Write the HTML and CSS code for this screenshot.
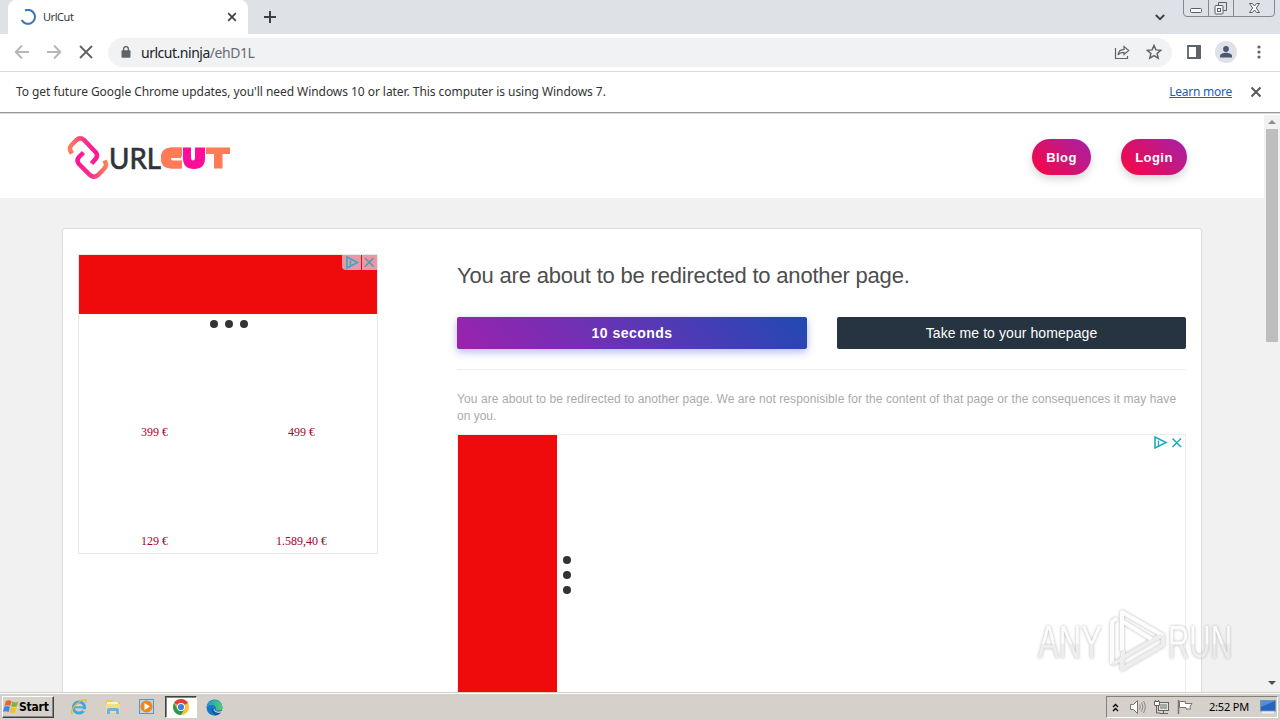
FILE: index.html
```html
<!DOCTYPE html>
<html lang="en">
<head>
<meta charset="utf-8">
<title>UrlCut</title>
<link rel="stylesheet" href="styles.css">
</head>
<body>
<div class="screen">
  <header class="tabstrip">
    <div class="tab">
      <svg class="spinner" width="16" height="16" viewBox="0 0 16 16"><path d="M5 1.500A7 7 0 1 1 1.700 11" fill="none" stroke="#3974b5" stroke-width="2"/></svg>
      <span class="tab-title">UrlCut</span>
      <svg class="tab-close" width="10" height="10" viewBox="0 0 10 10"><path d="M1.200 1.200l7.600 7.600M8.800 1.200L1.200 8.800" stroke="#3c4043" stroke-width="1.700"/></svg>
    </div>
    <svg class="new-tab" width="12" height="12" viewBox="0 0 12 12"><path d="M6 0v12M0 6h12" stroke="#3c4043" stroke-width="2"/></svg>
    <svg class="tab-search" width="10" height="7" viewBox="0 0 10 7"><path d="M.8 1L5 5.200 9.200 1" fill="none" stroke="#3c4043" stroke-width="1.800"/></svg>
    <svg class="win-controls" width="94" height="18" viewBox="0 0 94 18"><g fill="none" stroke="#85888e"><path d="M1.500 0v13q0 3.500 3.500 3.500h84q3.500 0 3.500-3.500V0M26.500 0v16M51.500 0v16"/><g stroke="#5b5e63"><rect x="8.500" y="8.500" width="11" height="4" rx="1" fill="#f6f7f9"/><path d="M36.500 5.500v-3h8v8h-3"/><rect x="33" y="5.500" width="8" height="8.500" rx="1" fill="#f6f7f9"/><rect x="35.500" y="8.500" width="3" height="3"/><path d="M67.500 3.500h3l2 2.500 2-2.500h3l-3.200 4.500 3.200 4.500h-3l-2-2.500-2 2.500h-3l3.200-4.500z" fill="#f6f7f9"/></g></g></svg>
  </header>

  <div class="toolbar">
    <svg class="nav" width="16" height="16" viewBox="0 0 16 16"><path d="M15 8H2M8 1.500L1.700 8 8 14.500" fill="none" stroke="#b4b6b9" stroke-width="1.900"/></svg>
    <svg class="nav" width="16" height="16" viewBox="0 0 16 16"><path d="M1 8h13M8 1.500L14.300 8 8 14.500" fill="none" stroke="#b4b6b9" stroke-width="1.900"/></svg>
    <svg class="nav" width="16" height="16" viewBox="0 0 16 16"><path d="M2 2l12 12M14 2L2 14" stroke="#5f6368" stroke-width="1.900"/></svg>
    <div class="omnibox">
      <svg width="10" height="12" viewBox="0 0 10 12"><rect x=".5" y="4.300" width="9" height="7.500" rx="1" fill="#5f6368"/><path d="M2.600 5V3a2.400 2.400 0 0 1 4.800 0v2" fill="none" stroke="#5f6368" stroke-width="1.400"/></svg>
      <span class="url">urlcut.ninja<span class="path">/ehD1L</span></span>
      <svg class="share" width="16" height="16" viewBox="0 0 16 16"><path d="M1.500 4v10.500h12V12M4 11c.6-4 3-5.500 6-5.600V2.500L14.700 6.500 10 10.500V8.300C7.300 8.300 5.500 9 4 11z" fill="none" stroke="#5f6368" stroke-width="1.200"/></svg>
      <svg class="star" width="16" height="16" viewBox="0 0 16 16"><path d="M8 1.500l1.900 4.400 4.800.4-3.600 3.200 1.100 4.700L8 11.700l-4.200 2.500 1.100-4.700-3.600-3.200 4.800-.4z" fill="none" stroke="#5f6368" stroke-width="1.500"/></svg>
    </div>
    <svg class="panel" width="14" height="14" viewBox="0 0 14 14"><path d="M1 1h12v12H1z" fill="none" stroke="#5f6368" stroke-width="1.800"/><path d="M9 1h5v12H9z" fill="#5f6368"/></svg>
    <svg class="avatar" width="22" height="22" viewBox="0 0 22 22"><circle cx="11" cy="11" r="11" fill="#dee1e6"/><circle cx="11" cy="8" r="2.900" fill="#4b5775"/><path d="M5 16.500v-1.500c0-2 3.500-3.200 6-3.200s6 1.200 6 3.200v1.500z" fill="#4b5775"/></svg>
    <svg class="kebab" width="4" height="14" viewBox="0 0 4 14"><g fill="#5f6368"><circle cx="2" cy="2" r="1.600"/><circle cx="2" cy="7" r="1.600"/><circle cx="2" cy="12" r="1.600"/></g></svg>
  </div>

  <div class="infobar">
    <span class="info-text">To get future Google Chrome updates, you'll need Windows 10 or later. This computer is using Windows 7.</span>
    <span class="learn">Learn more</span>
    <svg width="12" height="12" viewBox="0 0 12 12"><path d="M1.500 1.500l9 9M10.500 1.500l-9 9" stroke="#55585c" stroke-width="1.900"/></svg>
  </div>

  <div class="viewport">
    <div class="page">
      <div class="site-header">
        <svg class="logo" width="164" height="46" viewBox="0 0 164 46">
          <defs>
            <linearGradient id="linkA" x1="0" x2="1"><stop offset="0" stop-color="#ff7e57"/><stop offset=".55" stop-color="#f6308a"/><stop offset="1" stop-color="#ff1695"/></linearGradient>
            <linearGradient id="linkB" x1="0" x2="1"><stop offset="0" stop-color="#ff1695"/><stop offset=".5" stop-color="#f6308a"/><stop offset="1" stop-color="#ff7e57"/></linearGradient>
          </defs>
          <path d="M5 18.500L3.500 16Q2 12.500 4.500 10L9.500 5Q13 1.800 17 5L28.500 17Q31.500 20.500 28.500 24L24.500 28.500" fill="none" stroke="url(#linkA)" stroke-width="4.500"/>
          <path d="M16.500 17.500L12 22Q9 25.500 12 29L23 40Q27 43.500 31 40L37 34Q40 31 38.500 27.500L37.500 25.500" fill="none" stroke="url(#linkB)" stroke-width="4.500"/>
          <text x="42" y="33.500" textLength="52" lengthAdjust="spacingAndGlyphs" class="logo-url">URL</text>
          <path d="M114 12.500h-9q-11 0-11 10.500t11 10.500h9v-6h-7q-4 0-4-4.500h11z" fill="#ff7b58"/>
          <path d="M114 12.500h-9q-11 0-11 10.500t11 10.500h10v-8h-9q-2 0-2-2t2-2h9v-9z" fill="#ff7b58"/>
          <path d="M116 12.500h8V23q0 2.500 2 2.500t2-2.500V12.500h10V23q0 11-11 11t-11-11z" fill="#ff0d98"/>
          <path d="M139 12.500h24v6.500h-7.500v14.500H147V19h-8z" fill="#ff7b58"/>
        </svg>
        <nav class="site-nav"><span class="pill">Blog</span><span class="pill login">Login</span></nav>
      </div>
      <main class="card">
        <aside class="ad-box">
          <div class="ad-banner">
            <div class="ad-choice">
              <svg width="19" height="15" viewBox="0 0 19 15"><path d="M5 2v11L15.500 7.500z" fill="none" stroke="#3aa9c4" stroke-width="1.700"/><path d="M8.500 5.500v6" stroke="#3aa9c4" stroke-width="1.500"/></svg>
              <svg class="ad-x" width="15" height="15" viewBox="0 0 15 15"><path d="M3 3l8.500 8.500M11.500 3L3 11.500" stroke="#4b9db6" stroke-width="1.500"/></svg>
            </div>
          </div>
          <div class="dots"><i></i><i></i><i></i></div>
          <div class="prices"><span>399 €</span><span>499 €</span><span>129 €</span><span>1.589,40 €</span></div>
        </aside>
        <section class="content">
          <h1>You are about to be redirected to another page.</h1>
          <div class="actions"><div class="btn wait"><span>10 seconds</span></div><div class="btn home"><span>Take me to your homepage</span></div></div>
          <p class="notice"><span class="line-one">You are about to be redirected to another page. We are not responisible for the content of that page or the consequences it may have</span><br>on you.</p>
          <div class="wide-ad">
            <div class="red-block"></div>
            <div class="dots vertical"><i></i><i></i><i></i></div>
            <svg class="wide-choice" width="32" height="15" viewBox="0 0 32 15"><path d="M2 2v11L13 7.500z" fill="none" stroke="#20aabf" stroke-width="1.600"/><path d="M5.500 5.500v6" stroke="#20aabf" stroke-width="1.400"/><path d="M19.500 3.500l8.500 8.500M28 3.500L19.500 12" stroke="#20aabf" stroke-width="1.500"/></svg>
          </div>
        </section>
      </main>
    </div>
    <div class="scrollbar">
      <svg width="8" height="4" viewBox="0 0 8 4"><path d="M0 4l4-4 4 4z" fill="#8b8b8b"/></svg>
      <div class="thumb"></div>
      <svg class="down" width="8" height="4" viewBox="0 0 8 4"><path d="M0 0h8L4 4z" fill="#505050"/></svg>
    </div>
  </div>

  <footer class="taskbar">
    <div class="start">
      <svg width="16" height="16" viewBox="0 0 16 16"><path d="M3 2q3-1.500 5.500.3L7.200 7Q5 5.500 1.500 6.800z" fill="#e8662c"/><path d="M9.300 2.600q3 1.500 6 .1L13.700 7.500q-3 1-5.600-.2z" fill="#83b53a"/><path d="M1.300 7.800q3-1.500 5.600.3L5.600 13Q3 11.500 0 12.800z" fill="#4289d5"/><path d="M7.800 8.400q3 1.300 5.700.2L12 13.500q-3 1.200-5.500-.3z" fill="#f5bf2c"/></svg>
      <span>Start</span>
    </div>
    <svg class="task" width="18" height="18" viewBox="0 0 18 18"><circle cx="9" cy="9.500" r="5.600" fill="none" stroke="#3ba8df" stroke-width="3"/><path d="M5 9.300h10" stroke="#45afe3" stroke-width="2"/><path d="M12 11.200h5v2h-4z" fill="#d5d0c9"/><path d="M2.500 16C-1.500 13 9 1 16 2q1 .7-.5 3" fill="none" stroke="#e6b93a" stroke-width="1.300"/></svg>
    <svg class="task" width="18" height="18" viewBox="0 0 18 18"><path d="M2 2h6l1 2h7v11H2z" fill="#e9c95b"/><path d="M3 4h11v6H3z" fill="#fff5bd"/><path d="M2 6h14v9H2z" fill="#f5de82"/><path d="M3 16v-4q0-2 2-2h8q2 0 2 2v4h-3v-3H6v3z" fill="#69b3dc"/></svg>
    <svg class="task" width="18" height="18" viewBox="0 0 18 18"><rect x="1.500" y="1.500" width="14" height="14" fill="#b9d7ed" stroke="#5794c8"/><circle cx="8.500" cy="8.500" r="6" fill="#f3851d"/><path d="M6.500 5v7l5.500-3.500z" fill="#fff"/></svg>
    <div class="task-active">
      <svg width="16" height="16" viewBox="0 0 16 16"><circle cx="8" cy="8" r="8" fill="#f6c52d"/><path d="M8 8L1.100 4A8 8 0 0 1 14.900 4z" fill="#df4336"/><path d="M1.100 4A8 8 0 0 0 8 16l3.500-6H4.500z" fill="#279b54"/><circle cx="8" cy="8" r="4" fill="#fff"/><circle cx="8" cy="8" r="3.100" fill="#3e7ee3"/></svg>
    </div>
    <svg class="edge" width="17" height="17" viewBox="0 0 17 17"><defs><linearGradient id="edge" x2="1"><stop stop-color="#1998d8"/><stop offset="1" stop-color="#55ce65"/></linearGradient></defs><circle cx="8.500" cy="8.500" r="8" fill="#1678c4"/><path d="M.6 8A8 8 0 0 1 16.500 8q0 3.500-4 3.500-3 0-2.500-2Q10 6 6 6 2 6 .6 8z" fill="url(#edge)"/><path d="M9 8.500q-1.500 1.500 0 3 2 2 6.500.5l1.500 1-3 1q-5 .5-6.500-3z" fill="#d5d0c9"/><path d="M5.500 8q-1 6 4 8.400Q13 16 15 13.500q-5 1.500-7.500-2z" fill="#1259a8"/></svg>
    <div class="tray">
      <svg class="up" width="7" height="9" viewBox="0 0 7 9"><path d="M1 4l2.500-2.500L6 4M1 8l2.500-2.500L6 8" fill="none" stroke="#000" stroke-width="1.300"/></svg>
      <svg class="volume" width="17" height="16" viewBox="0 0 17 16"><path d="M1.500 5.500h3l4-4v13l-4-4h-3z" fill="#fff" stroke="#77736d"/><path d="M10.500 5.500q1.500 2.500 0 5M12.500 3.500q3 4.500 0 9M14.500 2q3.500 6 0 12" fill="none" stroke="#8e8a84"/></svg>
      <svg class="network" width="17" height="16" viewBox="0 0 17 16"><rect x="5.500" y="3.500" width="10" height="8" fill="#e5e5df" stroke="#66625d"/><path d="M7 5h7v5H7z" fill="#a5aaa8"/><path d="M7 14.500h8M10.500 12v2M3.500 7v7H7" stroke="#66625d" fill="none"/><path d="M1.500 2.500h5v4h-5zM2.500 1v2M5.500 1v2" fill="#fff" stroke="#66625d"/></svg>
      <svg class="flag" width="17" height="16" viewBox="0 0 17 16"><path d="M1.500 1v14" stroke="#77736d" stroke-width="1.500"/><path d="M2.500 2.500h6v2h6.500l-2 3 .5 2.500H9V8.500H2.500z" fill="#fff" stroke="#77736d"/></svg>
      <span class="clock">2:52 PM</span>
      <svg class="desktop" width="16" height="14" viewBox="0 0 16 14"><rect x=".5" y=".5" width="15" height="10.500" fill="#2766bc" stroke="#7893b4"/><path d="M1 1h14L1 7z" fill="#4c91da"/><path d="M2 12.500h12" stroke="#e9eef5" stroke-width="2"/></svg>
    </div>
  </footer>

  <svg class="watermark" width="220" height="74" viewBox="0 0 220 74">
    <defs><linearGradient id="shade" x1="0" y1="0" x2="0" y2="1"><stop offset=".52" stop-color="#fdfdfd"/><stop offset=".55" stop-color="#ececec"/></linearGradient></defs>
    <g class="wm-text" fill="url(#shade)"><text x="8" y="54" textLength="64" lengthAdjust="spacingAndGlyphs">ANY</text><text x="138" y="54" textLength="64" lengthAdjust="spacingAndGlyphs">RUN</text></g>
    <path class="wm-light" d="M82 60V18l5-4M92 47V8l40 23-9 5-31-19"/>
    <path class="wm-dark" d="M82 60l11-5V46M132 31L92 54v11l41-24V31"/>
  </svg>
</div>
</body>
</html>
```
FILE: styles.css
```css
* { box-sizing: border-box; }
body { margin: 0; font-family: "Liberation Sans", Arial, sans-serif; }
svg { display: block; flex: none; }
.screen { position: relative; width: 1280px; height: 720px; overflow: hidden; display: flex; flex-direction: column; background: #fff; }

.tabstrip { height: 34px; flex: none; background: #dee1e6; display: flex; align-items: flex-start; padding-left: 8px; }
.tab { width: 240px; height: 34px; background: #fff; border-radius: 8px 8px 0 0; display: flex; align-items: center; padding: 0 11px 0 12px; }
.tab-title { margin: -2px 0 0 7px; font: 11px "Noto Sans", sans-serif; color: #35373a; letter-spacing: -.45px; }
.tab-close { margin-left: auto; }
.new-tab { margin: 11px 0 0 16px; }
.tab-search { margin: 14px 1px 0 auto; }
.win-controls { margin: 0 4px 0 16px; }

.toolbar { height: 38px; flex: none; display: flex; align-items: center; padding: 0 19px 1px 14px; border-bottom: 1px solid #d9dbde; }
.nav { margin-right: 16px; }
.omnibox { width: 1064px; height: 29px; margin-left: -2px; border-radius: 15px; background: #f0f2f4; display: flex; align-items: center; padding: 0 10px 0 13px; }
.url { margin-left: 10px; font: 14px "Noto Sans", sans-serif; color: #202124; letter-spacing: -.48px; }
.path { color: #696d72; }
.share { margin-left: auto; }
.star { margin-left: 16px; }
.panel { margin-left: 15px; }
.avatar { margin-left: 14px; }
.kebab { margin-left: auto; }

.infobar { height: 41px; flex: none; display: flex; align-items: center; padding: 0 18px 1px 16px; font: 12px "Noto Sans", sans-serif; color: #333; }
.info-text { white-space: nowrap; letter-spacing: -.055px; margin-top: -2px; }
.learn { margin: -2px 18px 0 auto; letter-spacing: -.25px; color: #245db2; text-decoration: underline; }

.viewport { height: 579px; flex: none; display: flex; box-shadow: inset 0 1px 0 #d8d8d8; border-top: 1px solid #a9a9a9; border-top-color: #999; padding-top: 1px; overflow: hidden; margin-top: -1px; height: 580px; padding-top: 2px; }
.page { width: 1264px; background: #f1f1f1; display: flex; flex-direction: column; }
.site-header { height: 83px; flex: none; background: #fff; display: flex; align-items: flex-start; justify-content: space-between; padding: 20px 77px 0 67px; }
.logo-url { font: 29px Lato, sans-serif; fill: #303438; stroke: #303438; stroke-width: .7px; }
.site-nav { display: flex; gap: 30px; margin-top: 4px; }
.pill { width: 59px; height: 36px; border-radius: 18px; background: linear-gradient(45deg, #fb0641, #a322a8); color: #fff; font-weight: bold; font-size: 13px; letter-spacing: .45px; display: flex; align-items: center; justify-content: center; box-shadow: 0 4px 8px rgba(0,0,0,.16); }
.login { width: 66px; }
.card { width: 1140px; height: 500px; flex: none; margin: 30px 0 0 62px; background: #fff; border: 1px solid #dcdcdc; border-radius: 3px; display: flex; padding: 25px 15px 0; }
.ad-box { width: 300px; height: 300px; border: 1px solid #e8e8e8; }
.ad-banner { height: 59px; background: #ef0b0b; display: flex; justify-content: flex-end; }
.ad-choice { height: 15px; display: flex; gap: 1px; }
.ad-choice svg { background: #ec98a4; border-radius: 0 0 0 4px; }
.ad-choice .ad-x { border-radius: 0; }
.dots { display: flex; gap: 7px; justify-content: center; margin-top: 6px; padding-left: 2px; }
.dots i { width: 8px; height: 8px; border-radius: 50%; background: #333; }
.prices { display: grid; grid-template-columns: 147px 147px; grid-auto-rows: 109px; margin-left: 2px; padding-top: 97px; text-align: center; color: #a9002b; font: 12px/14px "Liberation Serif", serif; }
.content { width: 729px; margin-left: 79px; }
h1 { margin: 8px 0 0; font-size: 22px; line-height: 28px; font-weight: 400; letter-spacing: -.19px; color: #4d4d4d; white-space: nowrap; }
.actions { display: grid; grid-template-columns: 350px 349px; gap: 30px; margin-top: 27px; padding-bottom: 20px; border-bottom: 1px solid #eee; }
.btn { height: 32px; border-radius: 2px; color: #fff; display: flex; align-items: center; justify-content: center; font-size: 14px; }
.wait { background: linear-gradient(45deg, #9d22ad, #6733b6 45%, #2049b2); box-shadow: 0 3px 8px rgba(63,81,221,.4); font-weight: bold; letter-spacing: .45px; }
.home { background: #263340; letter-spacing: .08px; }
.notice { margin: 21px 0 0; font-size: 12px; line-height: 17px; color: #aaa; white-space: nowrap; }
.line-one { letter-spacing: .091px; }
.wide-ad { height: 300px; margin-top: 9px; border: 1px solid #ececec; display: flex; }
.red-block { width: 99px; background: #ef0b0b; }
.vertical { flex-direction: column; justify-content: flex-start; margin: 121px 0 0 6px; padding: 0; }
.wide-choice { margin-left: auto; }
.scrollbar { width: 16px; background: #f1f1f1; display: flex; flex-direction: column; align-items: center; padding: 5px 0 7px; }
.thumb { width: 12px; height: 213px; margin-top: 5px; background: #bebebe; }
.down { margin-top: auto; }

.taskbar { height: 28px; flex: none; background: #d5d0c9; border-top: 1px solid #d5d0c9; box-shadow: inset 0 1px #fff; display: flex; align-items: center; padding: 1px 2px 0; }
.start { width: 52px; height: 22px; display: flex; align-items: center; border: 1px solid; border-color: #fff #404040 #404040 #fff; box-shadow: inset -1px -1px #8b8780; font: bold 12px "DejaVu Sans Condensed", sans-serif; letter-spacing: -.2px; }
.start span { margin-top: -1px; }
.task { margin-left: 16px; }
.task-active { width: 32px; height: 22px; margin-left: 9px; background: #fff; border: 1px solid; border-color: #404040 #fff #fff #404040; box-shadow: inset 1px 1px #8b8780; display: flex; align-items: center; justify-content: center; }
.edge { margin-left: 9px; }
.tray { width: 172px; height: 22px; margin-left: auto; border: 1px solid; border-color: #858078 #fff #fff #858078; display: flex; align-items: center; padding-left: 5px; }
.volume { margin-left: 10px; }
.network { margin-left: 7px; }
.flag { margin-left: 7px; }
.clock { width: 41px; margin: -1px 0 0 15px; font: 11px "Noto Sans", sans-serif; letter-spacing: -.2px; white-space: nowrap; }
.desktop { margin-left: 10px; }
.watermark { position: absolute; left: 1030px; top: 604px; filter: drop-shadow(0 0 1.500px #aaa); opacity: .85; }
.wm-text { font: 46px "Liberation Sans", sans-serif; }
.wm-light, .wm-dark { fill: none; stroke-width: 4; stroke-linejoin: round; stroke: #fdfdfd; }
.wm-dark { stroke: #ececec; }
```
